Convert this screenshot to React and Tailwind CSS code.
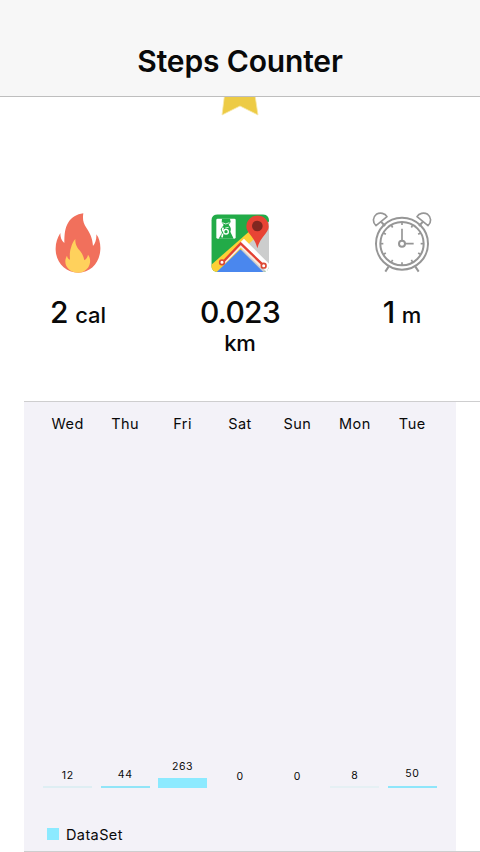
import React from "react";

function FlameIcon() {
  return (
    <svg width="80" height="80" viewBox="-5 -1 240 240" className="block">
      <path
        d="M131 39C128 57 131 68 140 82C151 99 158 111 160 137C167 129 171 117 170 102C179 113 183 132 182 148C180 187 153 217 116 217C77 217 49 186 48 149C47 130 53 112 62 98C62 111 65 121 74 128C74 100 76 84 85 68C96 50 111 42 131 39Z"
        fill="#f1705c"
      />
      <path
        d="M107 116C106 133 113 143 122 153C128 160 132 169 134 180C140 176 144 171 145 163C154 174 153 191 145 202C138 211 127 217 115 217C92 217 76 200 77 182C77 177 79 171 82 166C83 172 86 176 91 178C90 163 90 153 94 142C97 131 101 122 107 116Z"
        fill="#ffd15c"
      />
    </svg>
  );
}

function MapIcon() {
  return (
    <svg width="80" height="80" viewBox="0 0 240 240" className="block">
      <clipPath id="tile">
        <rect x="34" y="43" width="173" height="173" rx="18" />
      </clipPath>
      <g clipPath="url(#tile)">
        <rect x="34" y="43" width="173" height="173" fill="#22ab48" />
        <path d="M122 122L158 90L215 60V220H122Z" fill="#cccdcd" />
        <path d="M34 194L150 92L170 110L50 220H34Z" fill="#fdd036" />
        <path d="M124 124L207 207" fill="none" stroke="#fff" strokeWidth="22" />
        <path d="M69 190L122 136L187 200" fill="none" stroke="#fbe9dd" strokeWidth="10" />
        <path d="M46 220L121 148L194 220Z" fill="#4a87ee" />
        <path d="M69 186L122 130L188 194" fill="none" stroke="#e34133" strokeWidth="7" />
      </g>
      <circle cx="66" cy="187" r="7" fill="#fff" stroke="#dc4934" strokeWidth="5" />
      <circle cx="191" cy="197" r="7" fill="#fff" stroke="#dc4934" strokeWidth="5" />
      <path d="M139 80A33 33 0 0 1 206 80C206 99 181 109 172 145C164 109 139 99 139 80Z" fill="#e84435" />
      <circle cx="172" cy="78" r="16" fill="#812720" />
      <rect x="49" y="56" width="58" height="60" rx="4" fill="#fff" />
      <path d="M66 56H90L92 66L86 74Q96 84 91 95L101 116H56L66 98L62 88L71 75L65 67Z" fill="#22ab48" />
      <path d="M70 83Q65 92 72 94M68 101L66 112" fill="none" stroke="#fff" strokeWidth="5" />
      <circle cx="78" cy="95" r="7" fill="none" stroke="#fff" strokeWidth="4" />
      <path d="M67 68Q77 76 88 68M76 84L86 82" fill="none" stroke="#fff" strokeWidth="2.5" />
    </svg>
  );
}

function ClockIcon() {
  const ticks = [0, 30, 60, 90, 120, 150, 180, 210, 240, 270, 300, 330];
  return (
    <svg width="80" height="80" viewBox="0 0 240 240" className="block" fill="none" stroke="#969696">
      <circle cx="120" cy="131" r="78" strokeWidth="6" />
      <circle cx="120" cy="131" r="65" strokeWidth="6" />
      {ticks.map((a) => (
        <path key={a} d="M120 67V75" strokeWidth="5" transform={`rotate(${a} 120 131)`} />
      ))}
      <path
        d="M42 77C31 67 32 51 43 43C55 36 69 40 75 50ZM198 77C209 67 208 51 197 43C185 36 171 40 165 50Z"
        strokeWidth="5"
        strokeLinejoin="round"
      />
      <path d="M57 65L69 78M183 65L171 78M80 200L70 215M160 200L170 215" strokeWidth="6" />
      <circle cx="120" cy="131" r="9" strokeWidth="6" />
      <path d="M120 122V86M129 131H155" strokeWidth="5" />
    </svg>
  );
}

const stats = [
  { Icon: FlameIcon, value: "2", unit: "cal" },
  { Icon: MapIcon, value: "0.023", unit: "km" },
  { Icon: ClockIcon, value: "1", unit: "m" },
];

const days = [
  { day: "Wed", count: 12, bar: "h-[2px] bg-[#deeef3]", gap: "mb-[3px]" },
  { day: "Thu", count: 44, bar: "h-[2px] bg-[#91e5f8]", gap: "mb-[4px]" },
  { day: "Fri", count: 263, bar: "h-[10px] bg-[#8ceaff]", gap: "mb-[4px]" },
  { day: "Sat", count: 0, bar: "h-0", gap: "mb-[4px]" },
  { day: "Sun", count: 0, bar: "h-0", gap: "mb-[4px]" },
  { day: "Mon", count: 8, bar: "h-[2px] bg-[#e5f0f4]", gap: "mb-[3px]" },
  { day: "Tue", count: 50, bar: "h-[2px] bg-[#8ee6fb]", gap: "mb-[5px]" },
];

export default function App() {
  return (
    <div className="flex h-[852px] w-[480px] flex-col overflow-hidden bg-white font-['Inter',sans-serif] text-[#090909]">
      <header className="flex h-[97px] shrink-0 items-end justify-center border-b border-[#bebebe] bg-[#f7f7f7] pb-[16px]">
        <h1 className="text-[30px] leading-[38px] font-semibold tracking-[-0.15px]">Steps Counter</h1>
      </header>

      <section className="h-[304px] shrink-0">
        <svg width="40" height="20" viewBox="0 0 40 20" className="mx-auto block">
          <path d="M4.5 -2H35L38 18L20 9L2 18Z" fill="#edcb45" stroke="#f8e9a9" strokeWidth="0.8" />
        </svg>
        <div className="mt-[83px] grid grid-cols-3 gap-[54px] px-6">
          {stats.map(({ Icon, value, unit }) => (
            <div key={unit} className="flex flex-col items-center">
              <Icon />
              <p className="mt-[18px] text-center text-[30px] leading-[28px] font-[450] tracking-[-0.7px]">
                {value}{" "}
                <span className="text-[22px] leading-none tracking-[-0.1px]">{unit}</span>
              </p>
            </div>
          ))}
        </div>
      </section>

      <section className="ml-6 flex h-[451px] shrink-0 flex-col border-y border-[#cececf]">
        <div className="flex w-[432px] flex-1 flex-col bg-[#f3f2f8] px-[15px] pt-[11px]">
          <div className="grid grid-cols-7 text-center text-[14.5px] leading-[22px] tracking-[0.5px]">
            {days.map(({ day }) => (
              <span key={day}>{day}</span>
            ))}
          </div>
          <div className="grid h-[353px] grid-cols-7 items-end">
            {days.map(({ day, count, bar, gap }) => (
              <div key={day} className="flex flex-col items-center">
                <span className={`text-[10.5px] leading-[14px] tracking-[0.5px] ${gap}`}>{count}</span>
                <div className={`w-[49px] ${bar}`} />
              </div>
            ))}
          </div>
          <div className="mt-[36px] flex items-start gap-[7px] pl-2">
            <span className="mt-[4px] size-3 bg-[#8ceaff]" />
            <span className="pt-px text-[14.5px] leading-[20px] tracking-[0.4px]">DataSet</span>
          </div>
        </div>
      </section>
    </div>
  );
}
